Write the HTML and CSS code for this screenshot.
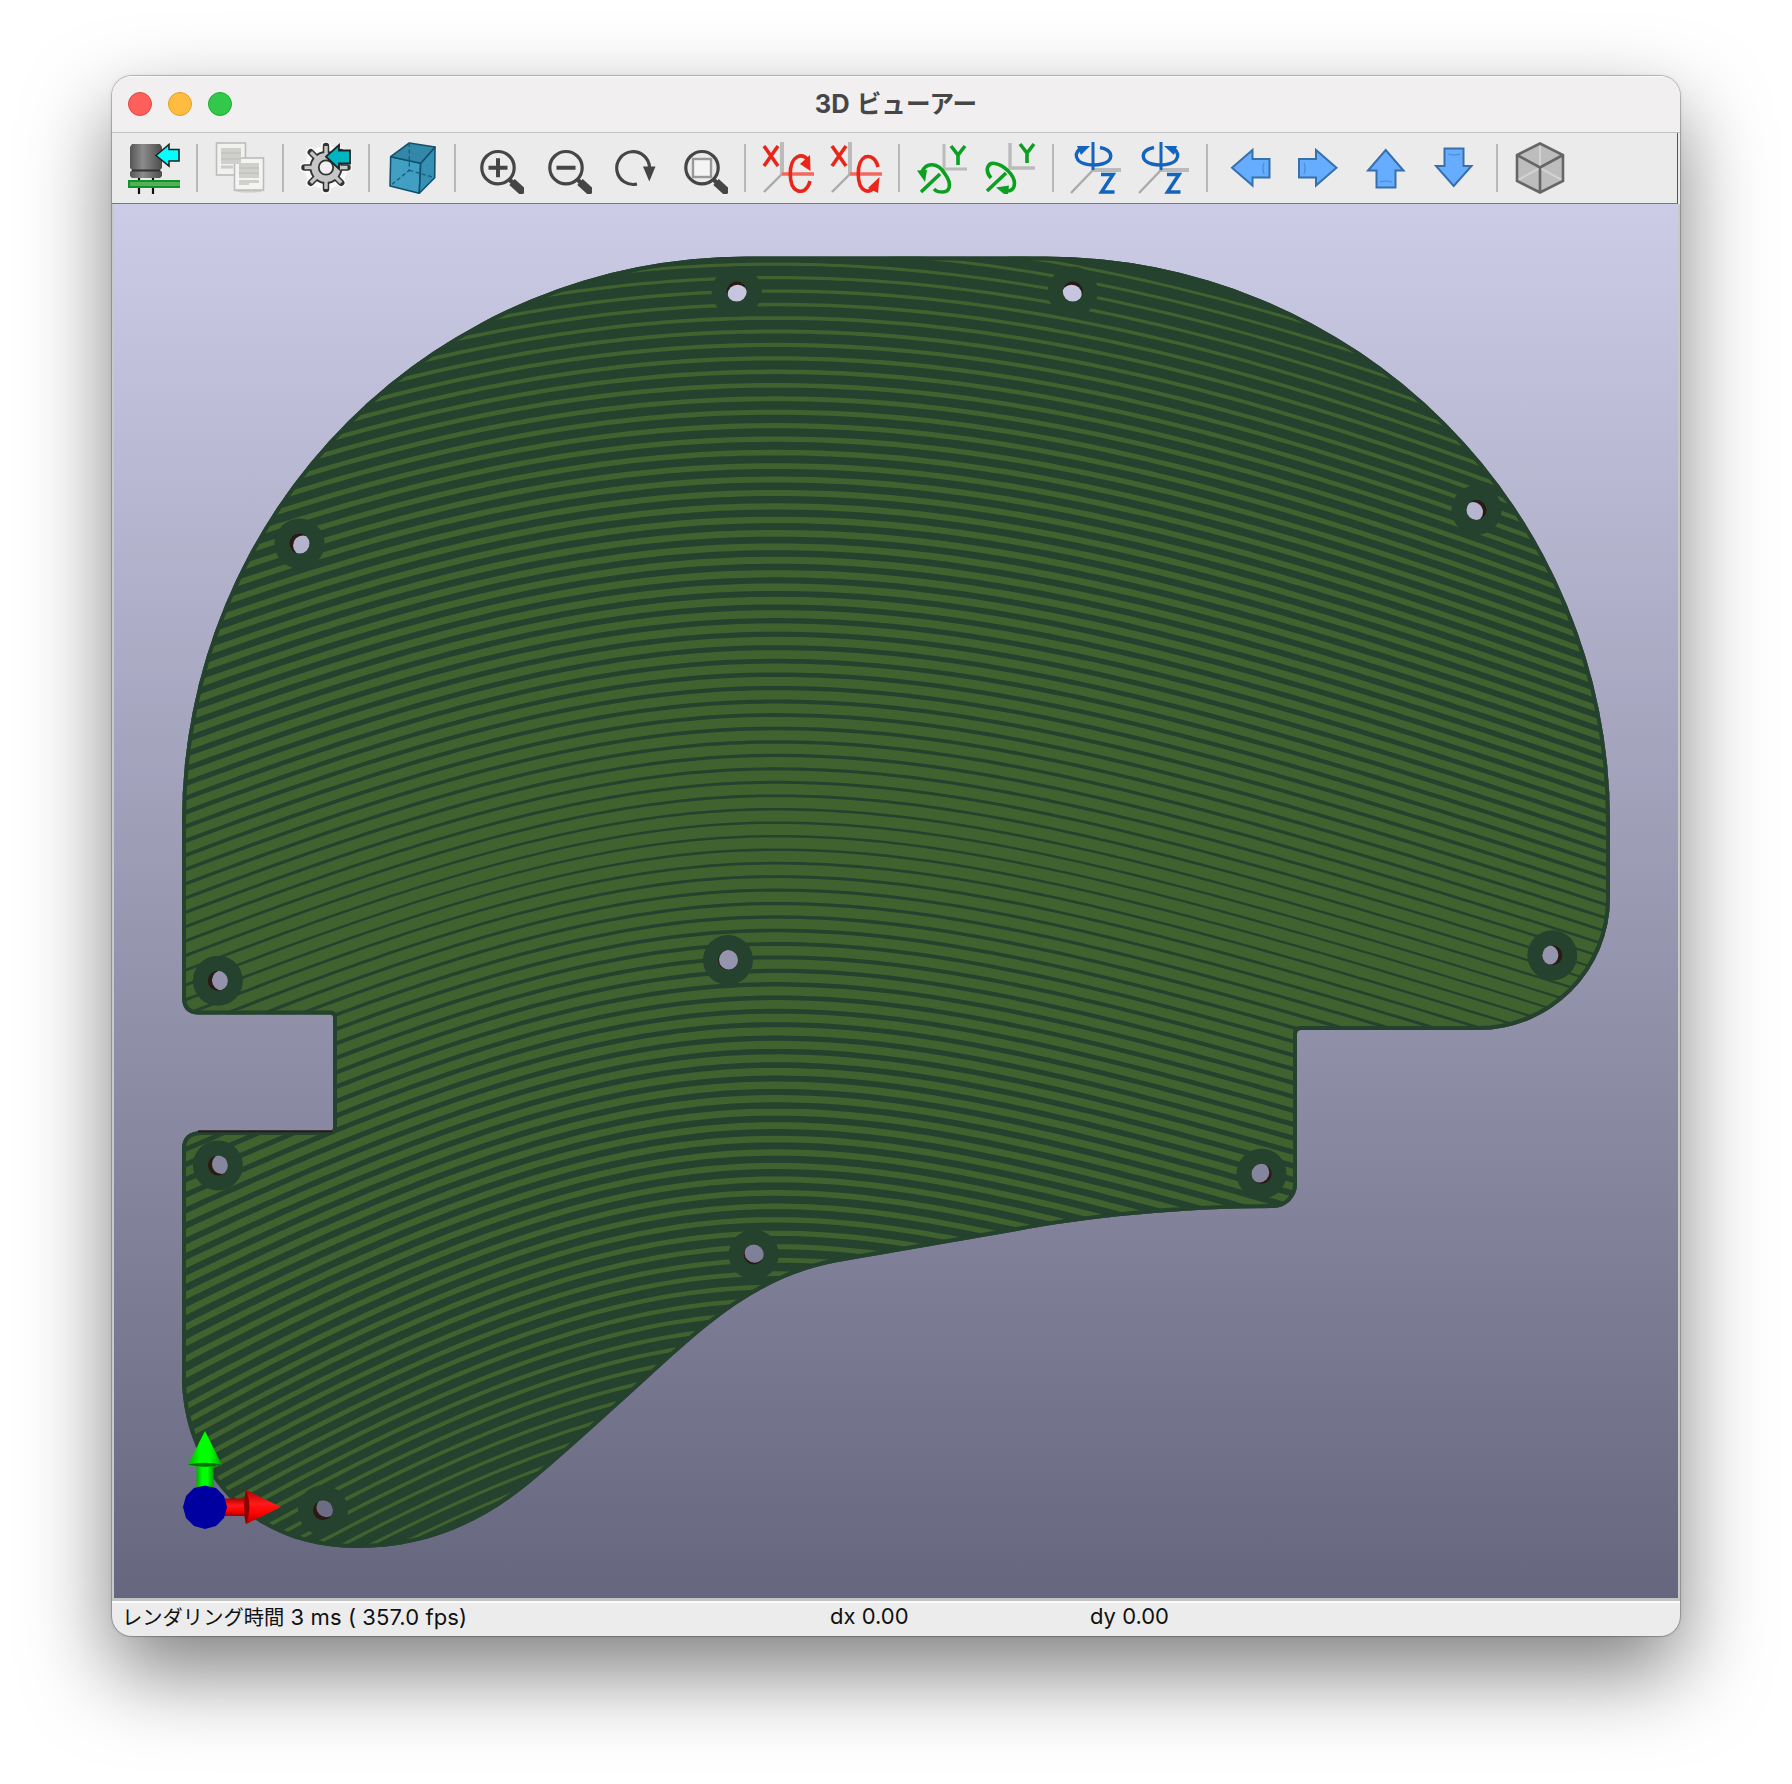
FILE: index.html
```html
<!DOCTYPE html>
<html lang="ja">
<head>
<meta charset="utf-8">
<title>3D ビューアー</title>
<link rel="stylesheet" href="styles.css">
</head>
<body>
<main class="window">
  <header class="titlebar">
    <div class="lights"><i class="light close"></i><i class="light minimize"></i><i class="light zoom"></i></div>
    <h1 class="title">3D <span class="kana">ビューアー</span></h1>
  </header>
  <nav class="toolbar">
    <svg class="icon" viewBox="0 0 52 52"><defs><linearGradient id="cap"><stop offset="0" stop-color="#555"/><stop offset=".4" stop-color="#8c8c8c"/><stop offset="1" stop-color="#4c4c4c"/></linearGradient></defs><path d="M11 35v17M25 35v17" stroke="#111" stroke-width="2.2"/><path d="M4 2H32L34 5V26L32 28L34 30V34L32 36H4L2 34V30L4 28L2 26V5Z" fill="url(#cap)"/><path d="M4 28.5H32" stroke="#333" stroke-width="2"/><rect y="38" width="52" height="8" fill="#0d9422"/><rect x="2" y="40" width="50" height="4" fill="#55ad5d"/><path d="M28 13.5L41 2.500V7.500H51V19H41V24Z" fill="#0ff" stroke="#222" stroke-width="1.6"/></svg>
    <i class="sep"></i>
    <svg class="icon" viewBox="0 0 52 52"><ellipse cx="35" cy="48.500" rx="15" ry="2" fill="#ccc"/><g stroke="#bcbcba" stroke-width="1.600"><rect x="2.500" y="1" width="29" height="32" fill="#f1f1ef"/><rect x="20.500" y="16" width="29" height="32" fill="#f4f4f2"/></g><path d="M7 6h20v16H7zM25 21h20v15H25zM25 38h20v3H35v2H25z" fill="#cfcfcc"/><path d="M7 11h20M7 17h20M25 26h20M25 31h20" stroke="#c2c2bf" stroke-width="1.600"/><path d="M7 25h12" stroke="#ccc" stroke-width="3"/></svg>
    <i class="sep"></i>
    <svg class="icon" viewBox="0 0 52 52"><g fill="none" stroke="#fafafa" stroke-width="9"><circle cx="26" cy="25.500" r="17"/></g><g stroke="#fafafa" stroke-width="10" stroke-linecap="round"><path d="M26 4V47M4.500 25.500H47.500M10.800 10.300L41.200 40.700M41.200 10.300L10.800 40.700"/></g><g stroke="#333" stroke-width="6.500" stroke-linecap="round"><path d="M26 4V47M4.500 25.500H47.500M10.800 10.300L41.200 40.700M41.200 10.300L10.800 40.700"/></g><circle cx="26" cy="25.500" r="16.500" fill="#333"/><g stroke="#c6c6c6" stroke-width="3.400"><path d="M26 4V47M4.500 25.500H47.500M10.800 10.300L41.200 40.700M41.200 10.300L10.800 40.700"/></g><circle cx="26" cy="25.500" r="14.600" fill="#c6c6c6"/><circle cx="26" cy="25.500" r="7.200" fill="#f0f0f0" stroke="#333" stroke-width="1.800"/><path d="M26 14.700L39 3V8.500H50V21.500H39V27Z" fill="#00b5c2" stroke="#222" stroke-width="1.800"/></svg>
    <i class="sep"></i>
    <svg class="icon" viewBox="0 0 52 52"><g stroke="#12516d" stroke-width="1.600" stroke-linejoin="round"><path d="M4.700 14.700L34.700 21.300L33.300 51.300L4 44Z" fill="#409fc2"/><path d="M34.700 21.300L49 5L48.700 35.700L33.300 51.300Z" fill="#3590b3"/><path d="M4.700 14.700L23.300 1L49 5L34.700 21.300Z" fill="#3388aa"/></g><path d="M23.300 1V28.300L4 44M23.300 28.300L48.700 35.700" fill="none" stroke="#1b5e7d" stroke-width="1.400" stroke-dasharray="4 2.500"/></svg>
    <i class="sep"></i>
    <svg class="icon" viewBox="0 0 52 52"><g fill="none" stroke="#454545"><circle cx="26" cy="25.700" r="16.200" stroke-width="3.200"/><path d="M37 37L41 41" stroke-width="4.500"/><path d="M40 40L52 51" stroke-width="8"/><path d="M16.500 25.700h19M26 16.200v19" stroke-width="4"/></g></svg>
    <svg class="icon" viewBox="0 0 52 52"><g fill="none" stroke="#454545"><circle cx="26" cy="25.700" r="16.200" stroke-width="3.200"/><path d="M37 37L41 41" stroke-width="4.500"/><path d="M40 40L52 51" stroke-width="8"/><path d="M16.500 25.700h19" stroke-width="4"/></g></svg>
    <svg class="icon" viewBox="0 0 52 52"><path d="M29 42A16.400 16.400 0 1 1 41.500 25.500V28" fill="none" stroke="#454545" stroke-width="3.200"/><path d="M35 24.500H47.500L41.300 39.500Z" fill="#454545"/></svg>
    <svg class="icon" viewBox="0 0 52 52"><g fill="none" stroke="#454545"><circle cx="26" cy="25.700" r="16.200" stroke-width="3.200"/><path d="M37 37L41 41" stroke-width="4.500"/><path d="M40 40L52 51" stroke-width="8"/></g><rect x="17" y="17" width="18" height="18" fill="#f4f4f4" stroke="#999" stroke-width="2.400"/></svg>
    <i class="sep"></i>
    <svg class="icon" viewBox="0 0 52 52" fill="none"><path d="M20 0V32" stroke="#bbb" stroke-width="4"/><path d="M20 32L2 50" stroke="#aaa" stroke-width="2.400"/><path d="M20 32H52" stroke="#f0695f" stroke-width="3.600"/><path d="M2 4L16 24M16 4L2 24M46 18C43 14 39 13 35 15C26 20 26 44 35 48.500C41 51 46 47 48 39" stroke="#e8261a" stroke-width="3.600"/><path d="M48 13L48.500 29L38 22Z" fill="#e8261a"/></svg>
    <svg class="icon" viewBox="0 0 52 52" fill="none"><path d="M20 0V32" stroke="#bbb" stroke-width="4"/><path d="M20 32L2 50" stroke="#aaa" stroke-width="2.400"/><path d="M20 32H52" stroke="#f0695f" stroke-width="3.600"/><path d="M2 4L16 24M16 4L2 24M48 25C46 17 41 13 35 15C26 20 26 44 35 48.500C39 50 43 48 46 44" stroke="#e8261a" stroke-width="3.600"/><path d="M49.500 35L48 51L38 46Z" fill="#e8261a"/></svg>
    <i class="sep"></i>
    <svg class="icon" viewBox="0 0 52 52" fill="none"><path d="M28 2V27H51" stroke="#bbb" stroke-width="3"/><path d="M35 4L42 13L49 4M42 12V23M5 50L24 32M6 30C10 20 22 20 29 32C37 43 33 50 27 50C23 50 21 50 18 47" stroke="#0ba021" stroke-width="3.600"/><path d="M1 28.500L11 28L9 40Z" fill="#0ba021"/></svg>
    <svg class="icon" viewBox="0 0 52 52" fill="none"><path d="M26 1V26H51" stroke="#bbb" stroke-width="3.400"/><path d="M36 2L43 11L50 2M43 10V21M3 49L22 31M7 36C0 28 4 20 11 21.500C20 23 30 33 30.500 41C30.500 46 28 49 23 49" stroke="#0ba021" stroke-width="3.600"/><path d="M12 45.500L25 43.500L24 52H20Z" fill="#0ba021"/></svg>
    <i class="sep"></i>
    <svg class="icon" viewBox="0 0 52 52" fill="none"><path d="M23 28H51" stroke="#bbb" stroke-width="4"/><path d="M23 28L1 51" stroke="#aaa" stroke-width="2.400"/><path d="M23 0V28" stroke="#1464bd" stroke-width="3"/><path d="M30 5.500C44 8 44 19 32 22C24 24 12 23 8 18C5 14 6 10 10 7M31 32.500H43L31.500 50H44.500" stroke="#1464bd" stroke-width="3.500"/><path d="M7 4H20L11 13Z" fill="#1464bd"/></svg>
    <svg class="icon" viewBox="0 0 52 52" fill="none"><path d="M23 28H51" stroke="#bbb" stroke-width="4"/><path d="M23 28L1 51" stroke="#aaa" stroke-width="2.400"/><path d="M23 0V28" stroke="#1464bd" stroke-width="3"/><path d="M16 5.500C2 8 2 19 14 22C22 24 34 23 38 18C41 14 40 10 36 7M29 32.500H41L29.500 50H42.500" stroke="#1464bd" stroke-width="3.500"/><path d="M39 4H26L36 13Z" fill="#1464bd"/></svg>
    <i class="sep"></i>
    <svg class="icon arrow" viewBox="0 0 52 52"><path d="M8 25.700L28.500 8V17H45.500V35.500H28.500V43.500Z"/><path class="shade" d="M40 21Q38 26 40 32"/></svg>
    <svg class="icon arrow" viewBox="0 0 52 52"><path d="M44.500 25.700L24 8V17H7V35.500H24V43.500Z"/><path class="shade" d="M12 21Q14 26 12 32"/></svg>
    <svg class="icon arrow" viewBox="0 0 52 52"><path d="M25.700 8L43.500 28.500H35.500V45.500H16.500V28.500H8Z"/><path class="shade" d="M20 40Q26 38 32 40"/></svg>
    <svg class="icon arrow" viewBox="0 0 52 52"><path d="M25.700 44L43.500 24H35.500V6.500H16.500V24H8Z"/><path class="shade" d="M20 12Q26 14 32 12"/></svg>
    <i class="sep"></i>
    <svg class="icon" viewBox="0 0 52 52"><path d="M26 1L49.300 13V39L26 51L2.700 39V13Z" fill="#bdbdbd"/><path d="M26 2V26M4 38L26 26L48 38" fill="none" stroke="#d2d2d2" stroke-width="2"/><path d="M26 1.500L49 13V39L26 50.500L3 39V13ZM3 13L26 25.500L49 13M26 25.500V50" fill="none" stroke="#666" stroke-width="2.600"/></svg>
  </nav>
  <section class="viewport">
    <svg class="scene" viewBox="114 204 1564 1394">
      <defs>
        <linearGradient id="sky" gradientUnits="userSpaceOnUse" x1="0" y1="204" x2="0" y2="1598"><stop offset="0" stop-color="#cccce6"/><stop offset="1" stop-color="#66667f"/></linearGradient>
        <linearGradient id="green"><stop offset="0" stop-color="#00b400"/><stop offset=".35" stop-color="#0f0"/><stop offset=".65" stop-color="#0f0"/><stop offset="1" stop-color="#00a000"/></linearGradient>
        <linearGradient id="red" x2="0" y2="1"><stop offset="0" stop-color="#b00000"/><stop offset=".4" stop-color="#ff1a1a"/><stop offset=".7" stop-color="#f00"/><stop offset="1" stop-color="#a00000"/></linearGradient>
        <path id="outline" d="M182 821A565 565 0 0 1 747 256.500H1045A565 565 0 0 1 1610 821V898A132 132 0 0 1 1478 1030H1301Q1297 1030 1297 1034V1184A24 24 0 0 1 1273 1208C1180 1208 1084 1218 1017 1231L835 1262.500C760 1277 710 1322 660 1367C617 1406 574 1446 530 1483C480 1524 425 1548 357 1548C240 1548 182 1460 182 1377V1149Q182 1131 202 1131H330Q333 1131 333 1128V1017.500Q333 1014.500 330 1014.500H199Q182 1014.500 182 997Z"/>
        <clipPath id="board"><use href="#outline"/></clipPath>
      </defs>
      <rect x="114" y="204" width="1564" height="1394" fill="url(#sky)"/>
      <use href="#outline" fill="#25422e"/>
      <g clip-path="url(#board)">
        <g id="stripes" fill="none" stroke="#40622f"></g>
        <use href="#outline" fill="none" stroke="#25422e" stroke-width="8"/>
      </g>
      <path d="M198 1131.200H332" stroke="#2a1a17" stroke-width="2"/>
      <g id="holes"></g>
      <g class="axes">
        <path d="M196.500 1462H213.500V1495H196.500Z" fill="url(#green)"/>
        <path d="M205 1431L222 1465Q205 1469 188 1465Z" fill="url(#green)"/>
        <path d="M188 1464.500Q205 1461 222 1464.500Q205 1469 188 1464.500Z" fill="#007000"/>
        <path d="M220 1498.500H248V1516H220Z" fill="url(#red)"/>
        <path d="M246 1490L281 1507L246 1524Q242 1507 246 1490Z" fill="url(#red)"/>
        <path d="M246 1490Q253 1507 246 1524Q242 1507 246 1490Z" fill="#8c0000"/>
        <path d="M205 1485.500L216 1488L224 1496L227 1507L224 1518L216 1526L205 1529L194 1526L186 1518L183 1507L186 1496L194 1488Z" fill="#0000a0"/>
      </g>
    </svg>
  </section>
  <footer class="status">
    <span class="cell time"><span class="kana">レンダリング時間</span> 3 ms ( 357.0 fps)</span>
    <span class="cell dx">dx 0.00</span>
    <span class="cell dy">dy 0.00</span>
  </footer>
</main>
<script src="board.js"></script>
</body>
</html>
```
FILE: styles.css
```css
* { box-sizing: border-box; }
body {
  margin: 0;
  padding: 76px 112px 0;
  background: #fff;
  height: 1784px;
  overflow: hidden;
  font-family: Inter, "Noto Sans CJK JP", sans-serif;
}
.window {
  display: flex;
  flex-direction: column;
  width: 1568px;
  height: 1560px;
  border-radius: 20px;
  background: #ececec;
  overflow: hidden;
  box-shadow: 0 0 0 1px rgba(0, 0, 0, .2), 0 0 4px rgba(0, 0, 0, .12), 0 36px 84px rgba(0, 0, 0, .5);
}
.titlebar {
  display: grid;
  grid-template-columns: 1fr auto 1fr;
  align-items: center;
  height: 57px;
  padding: 0 16px 2px;
  background: #f1eff0;
  border-top: 1px solid #fbfafa;
  border-bottom: 1px solid #c4c3c4;
}
.lights { display: flex; gap: 16px; }
.light { width: 24px; height: 24px; border-radius: 50%; border: 1px solid; }
.close { background: #ff5f5b; border-color: #df4844; }
.minimize { background: #ffbc40; border-color: #dfa023; }
.zoom { background: #34c84a; border-color: #1dac2e; }
.title { margin: 0; font-size: 25.5px; font-weight: 700; line-height: 30px; color: #474647; white-space: nowrap; }
.title .kana { font-size: 24.6px; margin-left: 1px; }
.toolbar {
  display: flex;
  align-items: center;
  gap: 16px;
  height: 71px;
  padding: 0 16px;
  margin-right: 2px;
  background: #ebebeb;
  border-right: 1px solid #555;
  border-bottom: 1px solid #777;
}
.icon { flex: none; width: 52px; height: 52px; }
.sep { flex: none; width: 2px; height: 48px; background: #b9b9b9; }
.arrow { fill: #66acff; stroke: #3870ab; stroke-width: 2; }
.arrow .shade { fill: none; stroke: #4a8ad0; stroke-width: 1.2; }
.viewport { height: 1394px; padding: 0 2px; background: #c9c9c9; }
.scene { display: block; width: 1564px; height: 1394px; }
.status {
  display: flex;
  align-items: center;
  flex: 1;
  padding: 0 10px 5px;
  border-top: 3px solid #c4c4c4;
  box-shadow: inset 0 2px #fafafa;
  font-size: 22px;
  color: #111;
  white-space: pre;
}
.status .kana { font-size: 20.3px; }
.time { width: 708px; letter-spacing: .1px; }
.time .kana { letter-spacing: 0; }
.dx { width: 260px; }
```
FILE: board.js
```js
const NS = 'http://www.w3.org/2000/svg';

// Linear interpolation in a table of [position, value, value, ...] rows.
function lookup(table, p) {
  let i = 0;
  while (i < table.length - 2 && p > table[i + 1][0]) i++;
  const a = table[i], b = table[i + 1];
  const t = (p - a[0]) / (b[0] - a[0]);
  return a.slice(1).map((v, k) => v + (b[k + 1] - v) * t);
}

// Arc shape on each side of the crest: dx^2 = A*d + k*d^2
const LEFT = [[240, 2880, 1.2], [290, 2850, 1.5], [385, 2750, 2.5], [520, 2300, 3.8], [655, 1930, 4.5], [800, 1690, 4.8], [1200, 1300, 2.2], [1450, 1050, 2], [1560, 950, 2]];
const RIGHT = [[240, 3020, 3], [290, 2960, 3], [800, 2050, 8.5], [960, 1865, 9], [1200, 1530, 9.8], [1500, 1200, 9.8]];
const WIDTH = [[150, 2.6], [260, 3], [560, 7], [725, 9.8], [835, 11.1], [1000, 8.8], [1152, 6.4], [1220, 5.4], [1450, 2.8], [1600, 2.4]];
const CREST_X = 775, PITCH = 13.46;

function drop(table, p, dx) {
  const [A, k] = lookup(table, Math.max(p, 200));
  return (-A + Math.sqrt(A * A + 4 * k * dx * dx)) / (2 * k);
}

const stripes = document.getElementById('stripes');
for (let n = -22; n < 92; n++) {
  const p = 318 + (n - 5) * PITCH;
  let d = '';
  for (let x = 170; x <= 1620; x += 10) {
    const y = p + drop(x < CREST_X ? LEFT : RIGHT, p, x - CREST_X);
    d += (d ? 'L' : 'M') + x + ' ' + y.toFixed(2);
  }
  const path = document.createElementNS(NS, 'path');
  path.setAttribute('d', d);
  path.setAttribute('stroke-width', lookup(WIDTH, p)[0].toFixed(2));
  stripes.appendChild(path);
}

const HOLES = [[736.7, 291.6], [1072.8, 291.6], [299.5, 543.6], [1476.5, 510], [217.9, 980.7], [217.9, 1165.4], [728, 960], [1552.3, 955.3], [1261.5, 1173.7], [753.7, 1254.5], [323, 1510.3]];
let markup = '';
HOLES.forEach(([x, y], i) => {
  const sx = x + (896 - x) * 0.006, sy = y + (910 - y) * 0.005;
  markup += `<clipPath id="h${i}"><circle cx="${x}" cy="${y}" r="10"/></clipPath>
    <circle cx="${x}" cy="${y}" r="25" fill="#25422e"/>
    <circle cx="${x}" cy="${y}" r="10" fill="#2a1a12"/>
    <circle cx="${sx}" cy="${sy}" r="10" fill="url(#sky)" clip-path="url(#h${i})"/>`;
});
document.getElementById('holes').innerHTML = markup;
```
